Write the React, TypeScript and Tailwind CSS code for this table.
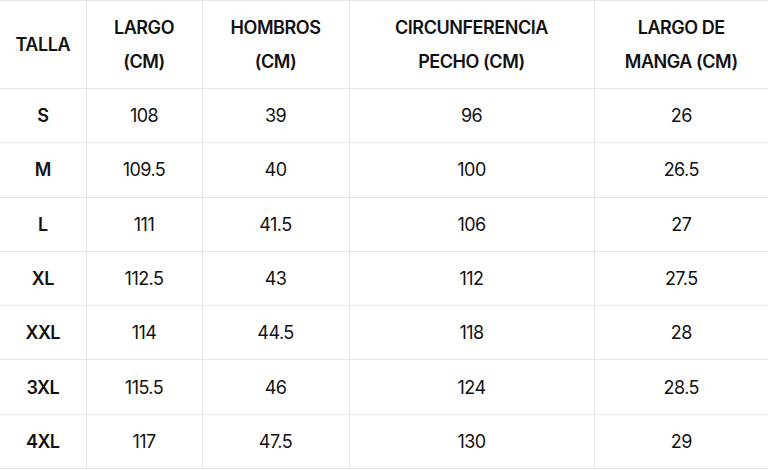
const headers = [
  ["TALLA"],
  ["LARGO", "(CM)"],
  ["HOMBROS", "(CM)"],
  ["CIRCUNFERENCIA", "PECHO (CM)"],
  ["LARGO DE", "MANGA (CM)"],
];

const rows = [
  ["S", "108", "39", "96", "26"],
  ["M", "109.5", "40", "100", "26.5"],
  ["L", "111", "41.5", "106", "27"],
  ["XL", "112.5", "43", "112", "27.5"],
  ["XXL", "114", "44.5", "118", "28"],
  ["3XL", "115.5", "46", "124", "28.5"],
  ["4XL", "117", "47.5", "130", "29"],
];

const widths = ["w-[86px]", "w-[116px]", "w-[147px]", "w-[245px]", "w-[174px]"];

export default function App() {
  return (
    <div className="bg-white w-[768px] h-[470px] overflow-hidden font-['Inter',sans-serif] text-[#111]">
      <table className="w-[768px] table-fixed border-collapse">
        <colgroup>
          {widths.map((w, i) => (
            <col key={i} className={w} />
          ))}
        </colgroup>
        <thead>
          <tr className="h-[88px]">
            {headers.map((lines, i) => (
              <th
                key={i}
                className={`border-[#e5e5e5] border-t border-b ${i > 0 ? "border-l" : ""} text-center font-semibold text-[18px] leading-[34px] tracking-[-0.025em] p-0`}
              >
                {lines.map((l, j) => (
                  <div key={j}>{l}</div>
                ))}
              </th>
            ))}
          </tr>
        </thead>
        <tbody>
          {rows.map((r, ri) => (
            <tr key={ri} className="h-[54.3px]">
              {r.map((c, ci) => (
                <td
                  key={ci}
                  className={`border-[#e5e5e5] border-b ${ci > 0 ? "border-l" : ""} text-center text-[18px] tracking-[-0.03em] ${ci === 0 ? "font-semibold" : "font-normal"}`}
                >
                  {c}
                </td>
              ))}
            </tr>
          ))}
        </tbody>
      </table>
    </div>
  );
}
